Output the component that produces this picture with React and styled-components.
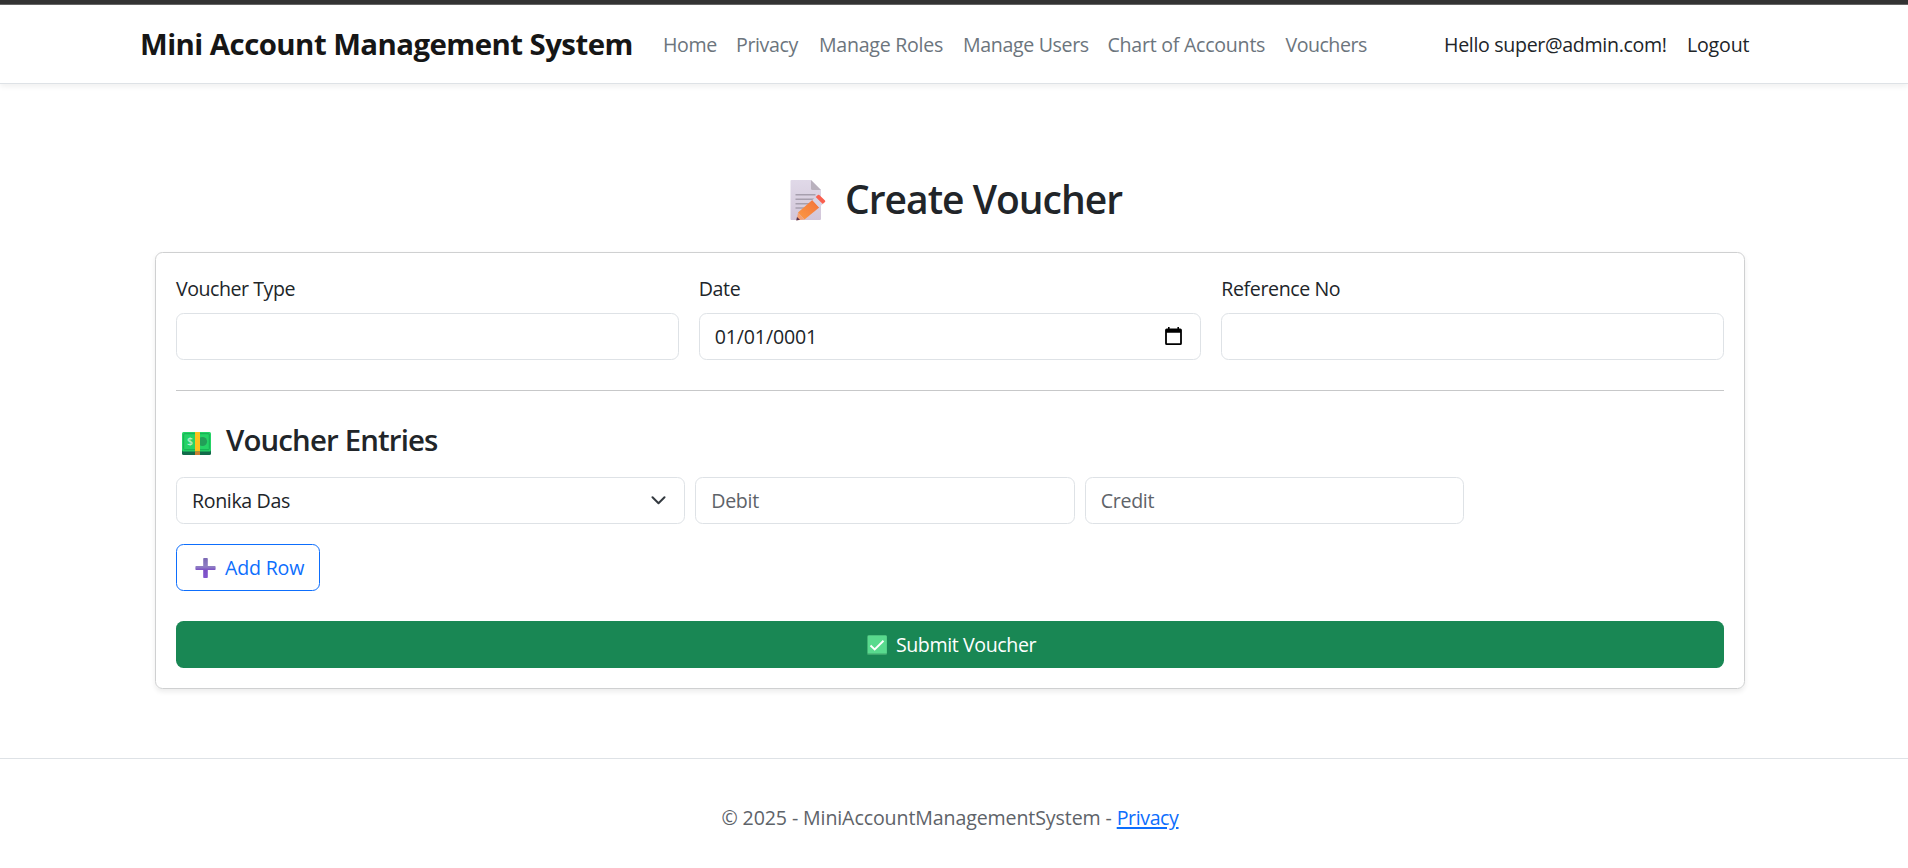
import React from "react";
import styled, { createGlobalStyle } from "styled-components";

const Global = createGlobalStyle`
  *, *::before, *::after { box-sizing: border-box; }
  body {
    margin: 0;
    background: #fff;
    color: #212529;
    font-family: "Open Sans", "Noto Sans", sans-serif;
    font-size: 19.6px;
    line-height: 30px;
  }
`;

const Page = styled.div`
  height: 868px;
  display: flex;
  flex-direction: column;
  overflow: hidden;
`;

const TopStrip = styled.div`
  height: 5px;
  flex: none;
  background: #333;
  border-bottom: 1px solid #666;
`;

const NavBar = styled.header`
  height: 79px;
  flex: none;
  border-bottom: 1px solid #dee2e6;
  box-shadow: 0 3px 5px rgba(0, 0, 0, 0.055);
  padding-right: 8px;
`;

const Container = styled.div`
  width: 1650px;
  height: 100%;
  margin: 0 auto;
  padding: 0 15px;
  display: flex;
  align-items: center;
`;

const Fit = styled.span`
  letter-spacing: ${(p) => p.$track ?? -0.33}px;
  white-space: nowrap;
`;

const Brand = styled.a`
  font-size: 29.4px;
  font-weight: 700;
  color: #161616;
  width: 513px;
  flex: none;
`;

const NavLink = styled.a`
  color: ${(p) => (p.$dark ? "#212529" : "#6c757d")};
  padding: 2px 0 0 10px;
  width: ${(p) => p.$w}px;
  flex: none;
`;

const Spacer = styled.div`
  flex: 1;
`;

const Main = styled.main`
  flex: none;
  width: 1598px;
  margin: 90px auto 0;
  padding-right: 8px;
`;

const Title = styled.h1`
  margin: 0;
  height: 78px;
  padding: 1px 0 0 635px;
  display: flex;
  align-items: flex-start;
  gap: 19px;
  font-size: 39px;
  font-weight: 600;
  line-height: 48px;
  svg { margin-top: 5px; }
`;

const Card = styled.form`
  height: 437px;
  border: 1px solid #cfd0d1;
  border-radius: 7.5px;
  box-shadow: 0 2.5px 5px rgba(0, 0, 0, 0.075);
  padding: 20px;
`;

const Fields = styled.div`
  display: grid;
  grid-template-columns: repeat(3, 1fr);
  gap: 20px;
`;

const Field = styled.label`
  display: block;
`;

const FieldLabel = styled.div`
  height: 40px;
  padding-top: 1px;
`;

const Control = styled.div`
  height: 47px;
  border: 1px solid #dee2e6;
  border-radius: 7.5px;
  padding: 0 15px;
  display: flex;
  align-items: center;
  justify-content: space-between;
  color: ${(p) => (p.$placeholder ? "#5e6369" : "#212529")};
`;

const Divider = styled.div`
  height: 1px;
  margin: 30px 0;
  background: #c7c8c9;
`;

const Subtitle = styled.h4`
  margin: 0;
  height: 56px;
  padding-left: 6px;
  display: flex;
  gap: 15px;
  font-size: 29.4px;
  font-weight: 600;
  line-height: 38px;
  svg { margin-top: 11px; }
`;

const EntryRow = styled.div`
  display: grid;
  grid-template-columns: 509.3px 379.5px 379.5px;
  gap: 10px;
`;

const AddButton = styled.button`
  width: 144px;
  height: 47px;
  margin: 20px 0 30px;
  padding: 0 0 0 18px;
  display: flex;
  align-items: center;
  gap: 9px;
  border: 1px solid #0d6efd;
  border-radius: 7.5px;
  background: #fff;
  color: #0d6efd;
  font: inherit;
`;

const SubmitButton = styled.button`
  width: 100%;
  height: 47px;
  padding: 0 0 0 3px;
  display: flex;
  align-items: center;
  justify-content: center;
  gap: 9px;
  border: 0;
  border-radius: 7.5px;
  background: #198754;
  color: #fff;
  font: inherit;
`;

const Footer = styled.footer`
  margin-top: 69px;
  border-top: 1px solid #dee2e6;
  padding: 44px 8px 0 0;
  display: flex;
  justify-content: center;
  gap: 5px;
  color: #5e6369;
`;

const FooterLink = styled.a`
  color: #0d6efd;
  text-decoration: underline;
  text-underline-offset: 2px;
  text-decoration-thickness: 2px;
`;

const MemoIcon = () => (
  <svg width="36" height="41" viewBox="0 0 36 41">
    <defs>
      <linearGradient id="sheet" x1="0" y1="0" x2="0" y2="1">
        <stop offset="0" stopColor="#e0d9e8" />
        <stop offset="1" stopColor="#d2c6d9" />
      </linearGradient>
      <linearGradient id="pencil" x1="1" y1="0" x2="0" y2="1">
        <stop offset="0" stopColor="#f3723a" />
        <stop offset="1" stopColor="#fb9a45" />
      </linearGradient>
    </defs>
    <path d="M1.500 0H21l10 10v29a1 1 0 0 1-1 1H1.500a1 1 0 0 1-1-1V1a1 1 0 0 1 1-1z" fill="url(#sheet)" />
    <path d="M21 0l10 10h-8.500a1.500 1.500 0 0 1-1.500-1.500z" fill="#b9b1bd" />
    <path d="M5.500 14.700h20M5.500 19.200h19M5.500 23.700h15M5.500 28h10" stroke="#a79fae" strokeWidth="1.600" />
    <path d="M8 32.500L22.300 20l6.900 7.500-14.700 12z" fill="url(#pencil)" />
    <path d="M8 32.500l6.500 7-7.800.8z" fill="#f6a070" />
    <path d="M7 37l3 2.700-3.800.7z" fill="#58304c" />
    <path d="M22.300 20l3.400-3 7 7-3.500 3.500z" fill="#d9d3e4" />
    <path d="M25.700 17l2.200-1.900a1 1 0 0 1 1.400 0l5.700 5.500a1 1 0 0 1 0 1.400l-2.300 2z" fill="#f9604f" />
  </svg>
);

const CashIcon = () => (
  <svg width="29" height="23" viewBox="0 0 29 23">
    <rect y="4" width="29" height="19" rx="1.500" fill="#126b4a" />
    <rect width="29" height="19.500" rx="1.500" fill="#25d366" />
    <rect x="1.700" y="1.700" width="25.600" height="16" rx="1" fill="none" stroke="#17ad54" strokeWidth="1" />
    <circle cx="20.500" cy="9.500" r="4.600" fill="#229e58" />
    <text x="5" y="13.400" fontSize="10.500" fontWeight="600" fill="#b5efc2">$</text>
    <rect x="13" width="5" height="19.500" fill="#fcc21f" />
    <rect x="13" y="19.500" width="5" height="3.500" fill="#c87f31" />
  </svg>
);

const PlusIcon = () => (
  <svg width="21" height="20" viewBox="0 0 21 20">
    <defs>
      <linearGradient id="plus" x1="0" y1="0" x2="0" y2="1">
        <stop offset="0" stopColor="#7b68b4" />
        <stop offset="0.450" stopColor="#8f7fc4" />
        <stop offset="0.600" stopColor="#7c4fc4" />
        <stop offset="1" stopColor="#8257d0" />
      </linearGradient>
    </defs>
    <path d="M9 0h3a.8.8 0 0 1 .8.800V8h7a.8.8 0 0 1 .8.800v2.400a.8.8 0 0 1-.8.800h-7v7.200a.8.8 0 0 1-.8.800H9a.8.8 0 0 1-.8-.8V12h-7a.8.8 0 0 1-.8-.8V8.800A.8.8 0 0 1 1.200 8h7V.8A.8.8 0 0 1 9 0z" fill="url(#plus)" />
  </svg>
);

const CheckIcon = () => (
  <svg width="20" height="20" viewBox="0 0 20 20">
    <rect width="20" height="20" rx="1.500" fill="#3da66c" />
    <rect x="0.800" y="0.600" width="19" height="18" rx="1.200" fill="#59da8e" />
    <path d="M3.500 10.500l4.200 4L16.500 5.800" fill="none" stroke="#fff" strokeWidth="1.900" />
  </svg>
);

const CalendarIcon = () => (
  <svg width="17" height="18" viewBox="0 0 17 18">
    <path d="M1.700 1.500h13.600A1.600 1.600 0 0 1 16.900 3.100v13.300a1.600 1.600 0 0 1-1.600 1.600H1.700A1.600 1.600 0 0 1 .1 16.400V3.100a1.600 1.600 0 0 1 1.600-1.600zM1.900 5.800v10.400h13.200V5.800z" fillRule="evenodd" />
    <path d="M3 0h1.600v2H3zM12.400 0H14v2h-1.600z" />
  </svg>
);

const Chevron = () => (
  <svg width="15" height="9" viewBox="0 0 15 9">
    <path d="M1.500 1.200l6 6 6-6" fill="none" stroke="#343a40" strokeWidth="2" strokeLinecap="round" strokeLinejoin="round" />
  </svg>
);

const DateControl = styled(Control)`
  padding-right: 18px;
  svg { margin-bottom: 2px; }
`;

const SelectControl = styled(Control)`
  padding-right: 18px;
`;

const links = [
  ["Home", 73, -0.35],
  ["Privacy", 83, -0.38],
  ["Manage Roles", 144, -0.27],
  ["Manage Users", 144.5, -0.36],
  ["Chart of Accounts", 178, -0.26],
  ["Vouchers", 100, -0.5],
];

export default function App() {
  return (
    <Page>
      <Global />
      <TopStrip />
      <NavBar>
        <Container>
          <Brand><Fit $track={-0.55}>Mini Account Management System</Fit></Brand>
          {links.map(([label, w, track]) => (
            <NavLink key={label} $w={w}><Fit $track={track}>{label}</Fit></NavLink>
          ))}
          <Spacer />
          <NavLink $dark $w={243}><Fit $track={-0.32}>Hello super@admin.com!</Fit></NavLink>
          <NavLink $dark $w={83}><Fit $track={-0.2}>Logout</Fit></NavLink>
        </Container>
      </NavBar>
      <Main>
        <Title><MemoIcon /><Fit $track={-1}>Create Voucher</Fit></Title>
        <Card>
          <Fields>
            <Field>
              <FieldLabel><Fit $track={-0.47}>Voucher Type</Fit></FieldLabel>
              <Control />
            </Field>
            <Field>
              <FieldLabel><Fit>Date</Fit></FieldLabel>
              <DateControl><Fit $track={-0.15}>01/01/0001</Fit><CalendarIcon /></DateControl>
            </Field>
            <Field>
              <FieldLabel><Fit $track={-0.4}>Reference No</Fit></FieldLabel>
              <Control />
            </Field>
          </Fields>
          <Divider />
          <Subtitle><CashIcon /><Fit $track={-0.85}>Voucher Entries</Fit></Subtitle>
          <EntryRow>
            <SelectControl><Fit $track={-0.36}>Ronika Das</Fit><Chevron /></SelectControl>
            <Control $placeholder><Fit>Debit</Fit></Control>
            <Control $placeholder><Fit>Credit</Fit></Control>
          </EntryRow>
          <AddButton type="button"><PlusIcon /><Fit $track={-0.2}>Add Row</Fit></AddButton>
          <SubmitButton type="button"><CheckIcon /><Fit $track={-0.4}>Submit Voucher</Fit></SubmitButton>
        </Card>
      </Main>
      <Footer>
        <Fit $track={-0.12}>© 2025 - MiniAccountManagementSystem -</Fit>
        <FooterLink><Fit $track={-0.4}>Privacy</Fit></FooterLink>
      </Footer>
    </Page>
  );
}
